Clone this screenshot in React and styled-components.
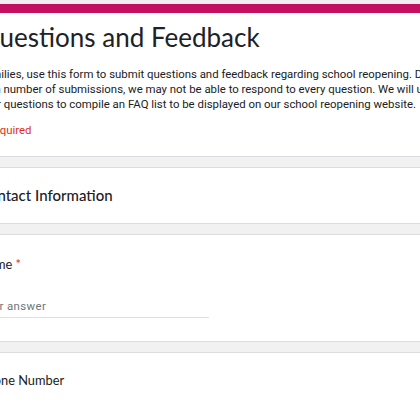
import React from "react";
import styled, { createGlobalStyle } from "styled-components";

const GlobalStyle = createGlobalStyle`
  html, body {
    margin: 0;
    padding: 0;
    background: #f1f1f1;
    overflow: hidden;
  }
`;

const Page = styled.div`
  display: flex;
  flex-direction: column;
  gap: 10px;
  padding-top: 4px;
  margin-left: -41px;
  width: 720px;
`;

const Card = styled.div`
  background: #ffffff;
  border: 1px solid #dadce0;
  border-top: ${(p) => (p.$accent ? "9px solid #c4105f" : "1px solid #dadce0")};
  border-radius: 8px;
  padding: ${(p) => p.$pad || "0 19px"};
`;

const Title = styled.h1`
  margin: 0;
  font-family: Lato, "Open Sans", sans-serif;
  font-weight: 400;
  font-size: 26px;
  line-height: 32px;
  color: #202124;
`;

const Description = styled.div`
  margin-top: 14px;
  font-family: Roboto, sans-serif;
  font-size: 11.4px;
  line-height: 15px;
  color: #202124;
  white-space: nowrap;
`;

const Line = styled.div``;

const Required = styled.div`
  margin-top: 11px;
  font-family: Roboto, sans-serif;
  font-size: 11.4px;
  line-height: 15px;
  color: #d93025;
`;

const SectionTitle = styled.div`
  font-family: Lato, "Open Sans", sans-serif;
  font-weight: 500;
  font-size: 15px;
  line-height: 20px;
  color: #202124;
`;

const Question = styled.div`
  font-family: Lato, "Open Sans", sans-serif;
  font-size: 12.8px;
  line-height: 20px;
  color: #202124;
`;

const Star = styled.span`
  color: #d93025;
`;

const AnswerField = styled.div`
  margin-top: 25px;
  width: 230px;
  border-bottom: 1px solid #e0e0e0;
  padding-bottom: 3px;
  font-family: Roboto, sans-serif;
  font-size: 11.4px;
  line-height: 15px;
  letter-spacing: 0.4px;
  color: #70757a;
`;

export default function App() {
  return (
    <>
      <GlobalStyle />
      <Page>
        <Card $accent $pad="8px 19px 18px">
          <Title>Questions and Feedback</Title>
          <Description>
            <Line>Families, use this form to submit questions and feedback regarding school reopening. Due to the</Line>
            <Line>high number of submissions, we may not be able to respond to every question. We will use</Line>
            <Line>your questions to compile an FAQ list to be displayed on our school reopening website.</Line>
          </Description>
          <Required>* Required</Required>
        </Card>
        <Card $pad="17px 19px 18px">
          <SectionTitle>Contact Information</SectionTitle>
        </Card>
        <Card $pad="19px 19px 23px">
          <Question>
            Name <Star>*</Star>
          </Question>
          <AnswerField>Your answer</AnswerField>
        </Card>
        <Card $pad="17px 19px 40px">
          <Question>Phone Number</Question>
        </Card>
      </Page>
    </>
  );
}
